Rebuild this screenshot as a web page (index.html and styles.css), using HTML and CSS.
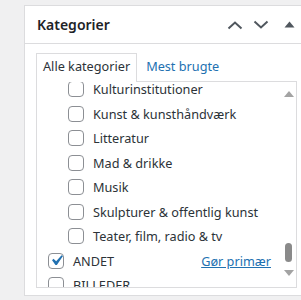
FILE: index.html
```html
<!DOCTYPE html>
<html lang="da">
<head>
<meta charset="utf-8">
<link rel="stylesheet" href="styles.css">
</head>
<body>
<div class="postbox">
  <div class="postbox-header">
    <h2 class="title">Kategorier</h2>
    <div class="actions">
      <svg class="chev" width="16" height="10" viewBox="0 0 16 10"><path d="M1.5 8.5 L8 2.5 L14.5 8.5" fill="none" stroke="#50575e" stroke-width="2"/></svg>
      <svg class="chev" width="16" height="10" viewBox="0 0 16 10"><path d="M1.5 1.5 L8 7.5 L14.5 1.5" fill="none" stroke="#50575e" stroke-width="2"/></svg>
      <svg class="tri" width="11" height="7" viewBox="0 0 11 7"><path d="M0.5 6.5 L5.5 0.5 L10.5 6.5 Z" fill="#50575e"/></svg>
    </div>
  </div>
  <div class="inside">
    <div class="tabs">
      <span class="tab active">Alle kategorier</span>
      <span class="tab link">Mest brugte</span>
    </div>
    <div class="panel">
      <ul class="list">
        <li class="row sub"><span class="cb"></span><span>Kulturinstitutioner</span></li>
        <li class="row sub"><span class="cb"></span><span>Kunst &amp; kunsthåndværk</span></li>
        <li class="row sub"><span class="cb"></span><span>Litteratur</span></li>
        <li class="row sub"><span class="cb"></span><span>Mad &amp; drikke</span></li>
        <li class="row sub"><span class="cb"></span><span>Musik</span></li>
        <li class="row sub"><span class="cb"></span><span>Skulpturer &amp; offentlig kunst</span></li>
        <li class="row sub"><span class="cb"></span><span>Teater, film, radio &amp; tv</span></li>
        <li class="row"><span class="cb checked"><svg width="21" height="21" viewBox="0 0 20 20"><path d="M14.83 4.89l1.34.94-5.81 8.38H9.02L5.78 9.67l1.34-1.25 2.57 2.4z" fill="#2271b1"/></svg></span><span class="label">ANDET</span><a class="primary">Gør primær</a></li>
        <li class="row"><span class="cb"></span><span>BILLEDER</span></li>
      </ul>
      <div class="scrollbar">
        <svg class="sb-arrow" width="10" height="6" viewBox="0 0 10 6"><path d="M0 6 L5 0 L10 6 Z" fill="#a3a3a3"/></svg>
        <div class="sb-track"><div class="sb-thumb"></div></div>
        <svg class="sb-arrow" width="10" height="6" viewBox="0 0 10 6"><path d="M0 0 L5 6 L10 0 Z" fill="#a3a3a3"/></svg>
      </div>
    </div>
  </div>
</div>
</body>
</html>
```
FILE: styles.css
```css
* { box-sizing: border-box; }
html, body { margin: 0; padding: 0; }
body {
  background: #f0f0f1;
  font-family: "Noto Sans", "Open Sans", sans-serif;
  color: #2c3338;
  width: 301px;
  height: 300px;
  overflow: hidden;
}
.postbox {
  margin: 5px 0 0 24px;
  width: 286px;
  height: 291px;
  background: #fff;
  border: 1px solid #dcdcde;
}
.postbox-header {
  height: 38px;
  border-bottom: 1px solid #dcdcde;
  display: flex;
  align-items: center;
  padding-left: 12px;
}
.title {
  margin: 0;
  font-size: 14px;
  font-weight: 600;
  color: #1d2327;
  flex: 1;
}
.actions {
  display: flex;
  align-items: center;
  gap: 10px;
  padding-right: 14px;
}
.tri { margin-left: 5px; }
.inside { padding: 8px 12px 0 11px; }
.tabs { display: flex; align-items: flex-end; height: 29px; }
.tab {
  font-size: 12.7px;
  padding: 3px 6px 6px;
  line-height: 18px;
}
.tab.active {
  border: 1px solid #dcdcde;
  border-bottom: none;
  background: #fff;
  position: relative;
  margin-bottom: -1px;
  height: 29px;
}
.tab.link { color: #2271b1; padding-left: 9px; }
.panel {
  border: 1px solid #dcdcde;
  height: 207px;
  display: flex;
  overflow: hidden;
}
.list {
  list-style: none;
  margin: -5px 0 0;
  padding: 0 0 0 11px;
  flex: 1;
  font-size: 12.7px;
}
.row {
  display: flex;
  align-items: center;
  height: 24.5px;
  gap: 9px;
}
.row.sub { padding-left: 20px; }
.cb {
  width: 16px;
  height: 16px;
  border: 1px solid #8c8f94;
  border-radius: 4px;
  background: #fff;
  flex: none;
  display: flex;
  align-items: center;
  justify-content: center;
  overflow: visible;
}
.cb svg { display: block; flex: none; margin: -3px; }
.label { flex: 1; }
.primary {
  color: #2271b1;
  text-decoration: underline;
  padding-right: 10px;
}
.scrollbar {
  width: 15px;
  display: flex;
  flex-direction: column;
  align-items: center;
  padding: 9px 0 11px;
}
.sb-track {
  flex: 1;
  position: relative;
  width: 100%;
}
.sb-thumb {
  position: absolute;
  left: 4px;
  right: 4px;
  bottom: 8px;
  height: 19px;
  border-radius: 4px;
  background: #8a8a8a;
}
```
